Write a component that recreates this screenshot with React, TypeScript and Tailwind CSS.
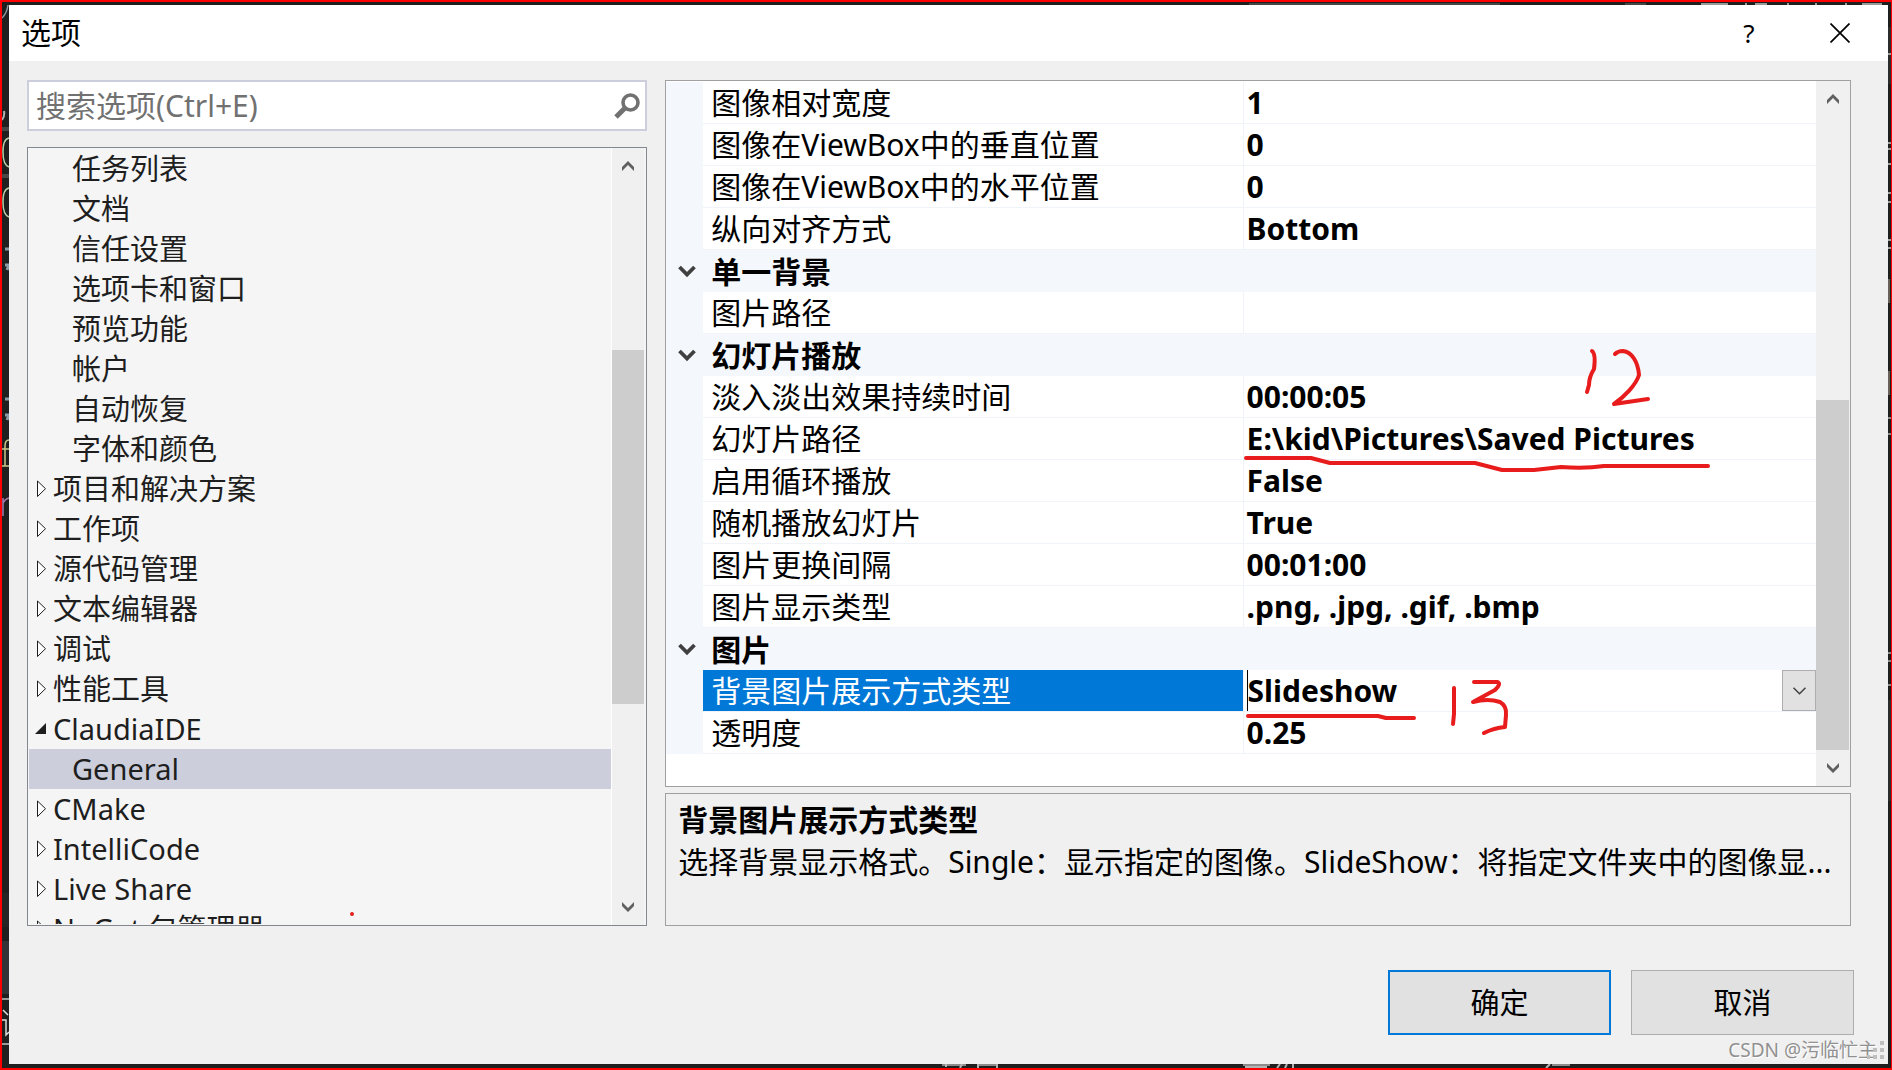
import React, { useState } from "react";

const treeItems = [
  { label: "任务列表", level: 1 },
  { label: "文档", level: 1 },
  { label: "信任设置", level: 1 },
  { label: "选项卡和窗口", level: 1 },
  { label: "预览功能", level: 1 },
  { label: "帐户", level: 1 },
  { label: "自动恢复", level: 1 },
  { label: "字体和颜色", level: 1 },
  { label: "项目和解决方案", level: 0 },
  { label: "工作项", level: 0 },
  { label: "源代码管理", level: 0 },
  { label: "文本编辑器", level: 0 },
  { label: "调试", level: 0 },
  { label: "性能工具", level: 0 },
  { label: "ClaudiaIDE", level: 0, open: true },
  { label: "General", level: 1 },
  { label: "CMake", level: 0 },
  { label: "IntelliCode", level: 0 },
  { label: "Live Share", level: 0 },
  { label: "NuGet 包管理器", level: 0 },
];

const properties = [
  { name: "图像相对宽度", value: "1" },
  { name: "图像在ViewBox中的垂直位置", value: "0" },
  { name: "图像在ViewBox中的水平位置", value: "0" },
  { name: "纵向对齐方式", value: "Bottom" },
  { name: "单一背景", category: true },
  { name: "图片路径", value: "" },
  { name: "幻灯片播放", category: true },
  { name: "淡入淡出效果持续时间", value: "00:00:05" },
  { name: "幻灯片路径", value: "E:\\kid\\Pictures\\Saved Pictures" },
  { name: "启用循环播放", value: "False" },
  { name: "随机播放幻灯片", value: "True" },
  { name: "图片更换间隔", value: "00:01:00" },
  { name: "图片显示类型", value: ".png, .jpg, .gif, .bmp" },
  { name: "图片", category: true },
  { name: "背景图片展示方式类型", value: "Slideshow", editing: true },
  { name: "透明度", value: "0.25" },
];

function ScrollArrow({ down = false }: { down?: boolean }) {
  return (
    <button type="button" aria-label={down ? "向下滚动" : "向上滚动"} className="flex h-9 w-full shrink-0 items-center justify-center">
      <svg className={down ? "rotate-180" : ""} width="12" height="10" viewBox="0 0 12 10" fill="#606060">
        <path d="M6 0 L12 6 V10 L6 4 L0 10 V6 Z" />
      </svg>
    </button>
  );
}

function Expander({ open }: { open?: boolean }) {
  return (
    <svg className="shrink-0" width="14" height="18" viewBox="0 0 14 18">
      {open ? (
        <path d="M12 3 V14 H1 Z" fill="#1e1e1e" />
      ) : (
        <path d="M3.5 1 V16.5 L11.5 8.7 Z" fill="#fff" stroke="#1e1e1e" strokeWidth="1" />
      )}
    </svg>
  );
}

function TitleBar() {
  return (
    <header className="flex h-14 shrink-0 items-center justify-between bg-white pb-px pl-3 pr-[38px] text-black">
      <h1 className="text-[30px] leading-10">选项</h1>
      <div className="flex items-center gap-[71px]">
        <button type="button" aria-label="帮助" className="w-5 text-[26px] leading-8">
          ?
        </button>
        <button type="button" aria-label="关闭" className="flex w-5 justify-center">
          <svg width="20" height="20" viewBox="0 0 20 20" stroke="#000" strokeWidth="1.7" fill="none">
            <path d="M0.5 0.5 L19.5 19.5 M19.5 0.5 L0.5 19.5" />
          </svg>
        </button>
      </div>
    </header>
  );
}

function SearchBox() {
  return (
    <div className="flex h-[51px] shrink-0 items-center border-2 border-[#cccedb] bg-white pr-1">
      <input
        type="text"
        aria-label="搜索选项"
        placeholder="搜索选项(Ctrl+E)"
        className="h-full min-w-0 flex-1 bg-transparent px-[7px] text-[30px] text-[#1e1e1e] outline-none placeholder:text-[#717171]"
      />
      <button type="button" aria-label="搜索">
        <svg width="28" height="28" viewBox="0 0 28 28" fill="none" stroke="#717171">
          <circle cx="17.5" cy="10.5" r="7.5" strokeWidth="3.6" />
          <path d="M12.5 15.5 L3 25" strokeWidth="5" />
        </svg>
      </button>
    </div>
  );
}

function OptionsTree() {
  const [selected, setSelected] = useState("General");

  return (
    <nav className="flex min-h-0 flex-1 border border-[#828790] bg-[#f5f5f5] pr-0.5">
      <ul className="my-px ml-px min-w-0 flex-1 overflow-hidden text-[29px] text-[#1e1e1e]">
        {treeItems.map((item) => (
          <li key={item.label}>
            <button
              type="button"
              onClick={() => setSelected(item.label)}
              className={`flex h-10 w-full items-center whitespace-nowrap text-left leading-10 ${
                item.level === 1 ? "pl-[43px]" : "gap-[5px] pl-[5px]"
              } ${selected === item.label ? "bg-[#cccedb]" : ""}`}
            >
              {item.level === 0 && <Expander open={item.open} />}
              {item.label}
            </button>
          </li>
        ))}
      </ul>
      <div className="flex w-[33px] flex-col border-l border-white bg-[#f0f0f0]">
        <ScrollArrow />
        <div className="grow-[166]" />
        <div className="grow-[354] bg-[#cdcdcd]" />
        <div className="grow-[185]" />
        <ScrollArrow down />
      </div>
    </nav>
  );
}

function PropertyGrid() {
  return (
    <section className="flex min-h-0 flex-1 border border-[#a0a0a0] bg-white">
      <div className="min-w-0 flex-1 overflow-hidden pt-px">
        <table className="w-full table-fixed border-separate border-spacing-0 text-[30px] leading-10 text-black">
          <colgroup>
            <col className="w-[37px]" />
            <col className="w-[47%]" />
            <col />
          </colgroup>
          <tbody>
            {properties.map((row) =>
              row.category ? (
                <tr key={row.name} className="h-[42px] bg-[#f4f7fc]">
                  <td className="p-0">
                    <button type="button" aria-label="折叠" className="flex w-full justify-center pl-1">
                      <svg width="18" height="13" viewBox="0 0 18 13" fill="none" stroke="#404040" strokeWidth="3.8">
                        <path d="M1.5 2 L9 9.5 L16.5 2" />
                      </svg>
                    </button>
                  </td>
                  <th colSpan={2} scope="rowgroup" className="p-0 pl-2 pt-px text-left font-bold">
                    {row.name}
                  </th>
                </tr>
              ) : (
                <tr key={row.name} className="h-[42px]">
                  <td className="bg-[#f4f7fc] p-0" />
                  <th
                    scope="row"
                    className={`whitespace-nowrap border-b border-r border-[#f0f4f9] p-0 pl-2 pt-px text-left font-normal ${
                      row.editing ? "bg-[#0078d7] text-white" : ""
                    }`}
                  >
                    {row.name}
                  </th>
                  <td className="whitespace-nowrap border-b border-[#f0f4f9] p-0 pl-[3px] font-bold">
                    {row.editing ? (
                      <div className="flex h-[41px] items-center">
                        <input
                          type="text"
                          aria-label={row.name}
                          defaultValue={row.value}
                          className="h-[41px] min-w-0 flex-1 border-l border-black bg-transparent font-bold outline-none"
                        />
                        <button
                          type="button"
                          aria-label="展开选项"
                          className="flex h-[41px] w-[34px] items-center justify-center border border-[#adadad] bg-[#e1e1e1]"
                        >
                          <svg width="13" height="8" viewBox="0 0 13 8" fill="none" stroke="#404040" strokeWidth="1.5">
                            <path d="M0.5 0.8 L6.5 6.8 L12.5 0.8" />
                          </svg>
                        </button>
                      </div>
                    ) : (
                      row.value
                    )}
                  </td>
                </tr>
              )
            )}
          </tbody>
        </table>
      </div>
      <div className="flex w-[34px] flex-col bg-[#f0f0f0] pr-px">
        <ScrollArrow />
        <div className="grow-[284]" />
        <div className="grow-[351] bg-[#cdcdcd]" />
        <ScrollArrow down />
      </div>
    </section>
  );
}

// Slivers of the dark editor window visible around the dialog
function EditorEdges() {
  return (
    <svg
      className="pointer-events-none absolute -left-0.5 -top-0.5"
      width="1892"
      height="1070"
      viewBox="0 0 1892 1070"
      fill="none"
    >
      {/* left */}
      <path d="M2 893h7v34H2z" fill="#252526" />
      <path d="M2 941h7v53H2z" fill="#333337" />
      <path d="M2 129h7M2 176h7" stroke="#464646" strokeWidth="4" />
      <path d="M8 5 Q7 13 2 18" stroke="#8c9aa5" strokeWidth="1.5" />
      <path d="M4 111 Q5 116 2 120" stroke="#b4b4b4" strokeWidth="2" />
      <path d="M9 138 Q3 139 3 152 Q3 165 9 167M9 188 Q3 189 3 202 Q3 215 9 217" stroke="#b5cea8" strokeWidth="1.5" />
      <path d="M5 249h4M5 265h4l-2 5M5 399h4M5 415h4l-2 5" stroke="#8c9aa5" strokeWidth="3" />
      <path d="M9 440 Q5 440 5 446 V466 M2 449h7M2 466h7" stroke="#c8c88c" strokeWidth="1.5" />
      <path d="M3 498 V516 M3 503 Q5 499 9 498" stroke="#a87cb0" strokeWidth="1.5" />
      <path d="M2 999h7M2 1044h7" stroke="#9a9a9a" strokeWidth="2" />
      <path d="M3 1010 L8 1015 M2 1020h4v15l3-3" stroke="#dcdcdc" strokeWidth="1.5" />
      {/* right */}
      <path d="M1888 27h3v57h-3zM1888 700h3v101h-3z" fill="#2d2d30" />
      <path d="M1888 54h3M1888 143h3M1888 149h3M1888 164h3M1888 193h3M1888 202h3M1888 240h3M1888 248h3" stroke="#a0a0a0" strokeWidth="2" />
      <path d="M1888 418h3M1888 434h3M1888 653h3M1888 661h3M1888 685h3" stroke="#8c8c8c" strokeWidth="2" />
      <path d="M1888 279h2v24h-2zM1888 371h2v24h-2z" fill="#6a625a" />
      {/* top */}
      <path d="M1249 4h251M1625 4h21" stroke="#464646" strokeWidth="2" />
      <path d="M1701 4h27M1745 4h2M1755 4h12M1787 4h2M1815 4h2M1845 4h2M1862 4h20" stroke="#9a9a9a" strokeWidth="2" />
      {/* bottom */}
      <path d="M942 1065h24M977 1065h20M1243 1065h27M1552 1065h18" stroke="#8c8c8c" strokeWidth="2" />
      <path d="M946 1064v3M962 1064l-2 4M978 1064v4M997 1064v4M1245 1067h22M1280 1064l-3 4M1287 1064l-2 4M1293 1064v4M1550 1064l-4 4" stroke="#b4b4b4" strokeWidth="2" />
    </svg>
  );
}

// Red pen marks laid over the grid values
function PenMarks() {
  return (
    <svg
      className="pointer-events-none absolute -left-0.5 -top-0.5"
      width="1892"
      height="1070"
      viewBox="0 0 1892 1070"
      fill="none"
      stroke="#e81c1c"
      strokeWidth="4"
      strokeLinecap="round"
      strokeLinejoin="round"
    >
      <path d="M1592 351 Q1596 354 1594 369 Q1589 377 1589 385 L1587 392" />
      <path d="M1615 354 Q1618 351 1623 351 C1632 352 1638 362 1639 375 C1636 385 1624 397 1614 404 Q1628 402 1648 399" />
      <path d="M1246 458 H1311 L1330 463 H1475 L1502 470 H1534 L1561 467 Q1585 469 1604 466 H1708" />
      <path d="M1248 716 H1378 L1386 718 H1414" />
      <path d="M1454 688 V714 L1453 724" />
      <path d="M1474 682 H1497 Q1502 683 1495 690 L1473 702 Q1488 698 1500 702 Q1507 706 1506 715 L1505 727 Q1494 728 1484 733" />
      <circle cx="352" cy="914" r="1" strokeWidth="2" />
    </svg>
  );
}

export default function App() {
  return (
    <div
      className="relative flex h-screen flex-col overflow-hidden border-2 border-r border-[#ff0000] bg-[#1f1f1f] pb-1 pl-[7px] pr-[3px] pt-[3px]"
      style={{ fontFamily: '"Noto Sans", "Noto Sans CJK SC", sans-serif' }}
    >
      <EditorEdges />

      <div className="relative flex min-h-0 flex-1 flex-col bg-[#f0f0f0]">
        <TitleBar />

        <main className="flex min-h-0 flex-1 gap-[18px] pl-[18px] pr-[37px] pt-[19px]">
          <div className="flex w-[34%] shrink-0 flex-col gap-4">
            <SearchBox />
            <OptionsTree />
          </div>

          <div className="flex min-w-0 flex-1 flex-col gap-1.5">
            <PropertyGrid />
            <section className="h-[133px] shrink-0 border border-[#a0a0a0] px-3 pt-[5px] text-[30px] leading-[42px] text-black">
              <h2 className="font-bold">背景图片展示方式类型</h2>
              <p className="truncate">选择背景显示格式。Single：显示指定的图像。SlideShow：将指定文件夹中的图像显...</p>
            </section>
          </div>
        </main>

        <footer className="shrink-0 pb-1 pt-11">
          <div className="flex justify-end gap-5 pr-[34px] text-[29px] text-black">
            <button type="button" className="h-[65px] w-[223px] border-2 border-[#0078d7] bg-[#e1e1e1]">
              确定
            </button>
            <button type="button" className="h-[65px] w-[223px] border border-[#adadad] bg-[#e1e1e1]">
              取消
            </button>
          </div>
          <div className="mt-1 flex h-[21px] items-center justify-end pr-1">
            <span className="text-[19px] leading-5 text-[#909090] [text-shadow:1px_1px_0_#fff]">CSDN @污临忙主</span>
            <svg className="-ml-2.5 shrink-0" width="17" height="18" viewBox="0 0 17 18" fill="#bfbfbf">
              <path d="M13 0h4v4h-4zM13 7h4v4h-4zM13 14h4v4h-4zM6 7h4v4h-4zM6 14h4v4h-4zM0 14h3v4h-3z" />
            </svg>
          </div>
        </footer>
      </div>

      <PenMarks />
    </div>
  );
}
